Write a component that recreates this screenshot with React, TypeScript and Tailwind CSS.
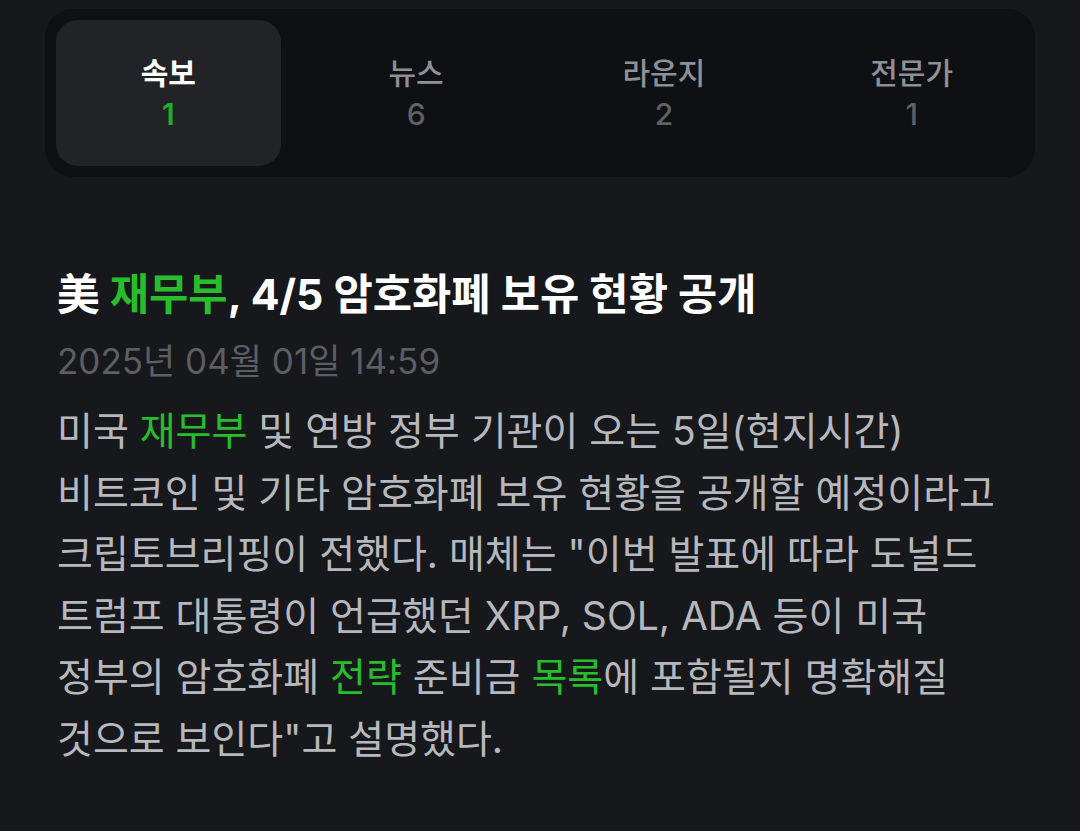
const tabs = [
  { label: '속보', count: 1, active: true },
  { label: '뉴스', count: 6 },
  { label: '라운지', count: 2 },
  { label: '전문가', count: 1 },
]

const G = ({ children }: { children: React.ReactNode }) => (
  <span className="text-[#27bd2c]">{children}</span>
)

export default function App() {
  return (
    <div
      className="min-h-[831px] w-[1080px] bg-[#17181c] px-[45px] pt-[9px]"
      style={{ fontFamily: 'Inter, "Noto Sans CJK KR", sans-serif' }}
    >
      <div className="grid h-[168px] grid-cols-4 gap-[23px] rounded-[28px] bg-[#0f1013] p-[11px]">
        {tabs.map((t) => (
          <div
            key={t.label}
            className={
              t.active
                ? 'flex flex-col items-center justify-center rounded-[22px] bg-[#222327]'
                : 'flex flex-col items-center justify-center'
            }
          >
            <span
              className={
                t.active
                  ? 'text-[30px] font-semibold leading-[40px] text-white'
                  : 'text-[30px] font-medium leading-[40px] text-[#8e9096]'
              }
            >
              {t.label}
            </span>
            <span
              className={
                t.active
                  ? 'mt-[1px] text-[30px] font-semibold leading-[40px] text-[#1fae27]'
                  : 'mt-[1px] text-[30px] font-medium leading-[40px] text-[#5f6167]'
              }
            >
              {t.count}
            </span>
          </div>
        ))}
      </div>

      <div className="px-[12px] pt-[92px]">
        <h1 className="text-[42.7px] font-bold leading-[52px] text-white">
          美 <G>재무부</G>, 4/5 암호화폐 보유 현황 공개
        </h1>
        <p className="mt-[18px] text-[35px] leading-[44px] text-[#5c5e64]">2025년 04월 01일 14:59</p>
        <p className="mt-[17px] text-[39px] leading-[61.6px] text-[#b6b8be]">
          미국 <G>재무부</G> 및 연방 정부 기관이 오는 5일(현지시간)
          <br />
          비트코인 및 기타 암호화폐 보유 현황을 공개할 예정이라고
          <br />
          크립토브리핑이 전했다. 매체는 "이번 발표에 따라 도널드
          <br />
          트럼프 대통령이 언급했던 XRP, SOL, ADA 등이 미국
          <br />
          정부의 암호화폐 <G>전략</G> 준비금 <G>목록</G>에 포함될지 명확해질
          <br />
          것으로 보인다"고 설명했다.
        </p>
      </div>
    </div>
  )
}
